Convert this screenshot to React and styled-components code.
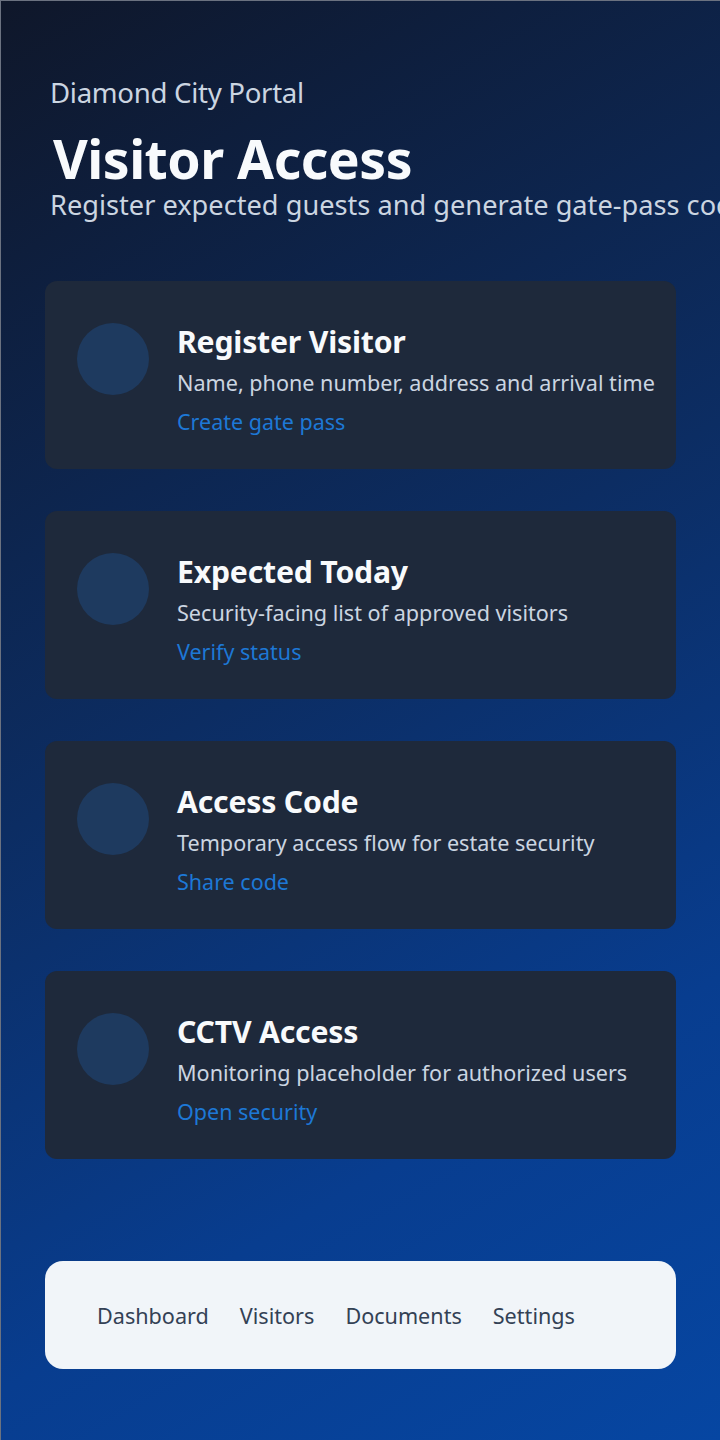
import styled, { createGlobalStyle } from 'styled-components';

const GlobalStyle = createGlobalStyle`
  html, body {
    margin: 0;
    padding: 0;
  }
  body {
    font-family: 'Noto Sans', 'Open Sans', sans-serif;
  }
`;

const Page = styled.div`
  box-sizing: border-box;
  width: 720px;
  height: 1440px;
  overflow: hidden;
  border-top: 1px solid #6b7280;
  border-left: 1px solid #6b7280;
  background: linear-gradient(150deg, #0f172a 0%, #0c2d63 45%, #083d8f 75%, #0646a2 100%);
  padding: 74px 44px 0 44px;
`;

const Header = styled.header`
  padding-left: 5px;
  margin-bottom: 58px;
`;

const Eyebrow = styled.div`
  font-size: 27.6px;
  line-height: 34px;
  color: #cbd5e1;
  letter-spacing: -0.3px;
`;

const Title = styled.h1`
  margin: 22px 0 0 3px;
  font-size: 53.5px;
  line-height: 56px;
  font-weight: 700;
  color: #f8fafc;
  letter-spacing: -0.5px;
`;

const Subtitle = styled.p`
  margin: 0;
  font-size: 27.2px;
  line-height: 36px;
  color: #cbd5e1;
  white-space: nowrap;
`;

const CardList = styled.div`
  display: flex;
  flex-direction: column;
  gap: 42px;
`;

const Card = styled.div`
  display: flex;
  align-items: flex-start;
  gap: 28px;
  height: 188px;
  box-sizing: border-box;
  padding: 42px 12px 32px 32px;
  background: #1e293b;
  border-radius: 12px;
`;

const Dot = styled.div`
  flex: none;
  width: 72px;
  height: 72px;
  border-radius: 50%;
  background: #1e3a5f;
`;

const CardText = styled.div`
  display: flex;
  flex-direction: column;
  min-width: 0;
`;

const CardTitle = styled.h2`
  margin: 0;
  font-size: 30.2px;
  line-height: 38px;
  font-weight: 700;
  color: #f8fafc;
  letter-spacing: -0.2px;
`;

const CardDesc = styled.p`
  margin: 7px 0 0 0;
  font-size: 21.6px;
  line-height: 30px;
  color: #cbd5e1;
  white-space: nowrap;
`;

const CardLink = styled.a`
  margin-top: 9px;
  font-size: 21.5px;
  line-height: 30px;
  color: #1d78d6;
  text-decoration: none;
`;

const Nav = styled.nav`
  margin-top: 102px;
  display: flex;
  align-items: center;
  gap: 31px;
  height: 108px;
  box-sizing: border-box;
  padding: 0 52px;
  background: #f1f5f9;
  border-radius: 18px;
`;

const NavItem = styled.span`
  font-size: 21.6px;
  color: #334155;
`;

const cards = [
  { title: 'Register Visitor', desc: 'Name, phone number, address and arrival time', link: 'Create gate pass' },
  { title: 'Expected Today', desc: 'Security-facing list of approved visitors', link: 'Verify status' },
  { title: 'Access Code', desc: 'Temporary access flow for estate security', link: 'Share code' },
  { title: 'CCTV Access', desc: 'Monitoring placeholder for authorized users', link: 'Open security' },
];

export default function App() {
  return (
    <>
      <GlobalStyle />
      <Page>
        <Header>
          <Eyebrow>Diamond City Portal</Eyebrow>
          <Title>Visitor Access</Title>
          <Subtitle>Register expected guests and generate gate-pass codes for your visitors</Subtitle>
        </Header>
        <CardList>
          {cards.map(c => (
            <Card key={c.title}>
              <Dot />
              <CardText>
                <CardTitle>{c.title}</CardTitle>
                <CardDesc>{c.desc}</CardDesc>
                <CardLink href="#">{c.link}</CardLink>
              </CardText>
            </Card>
          ))}
        </CardList>
        <Nav>
          <NavItem>Dashboard</NavItem>
          <NavItem>Visitors</NavItem>
          <NavItem>Documents</NavItem>
          <NavItem>Settings</NavItem>
        </Nav>
      </Page>
    </>
  );
}
